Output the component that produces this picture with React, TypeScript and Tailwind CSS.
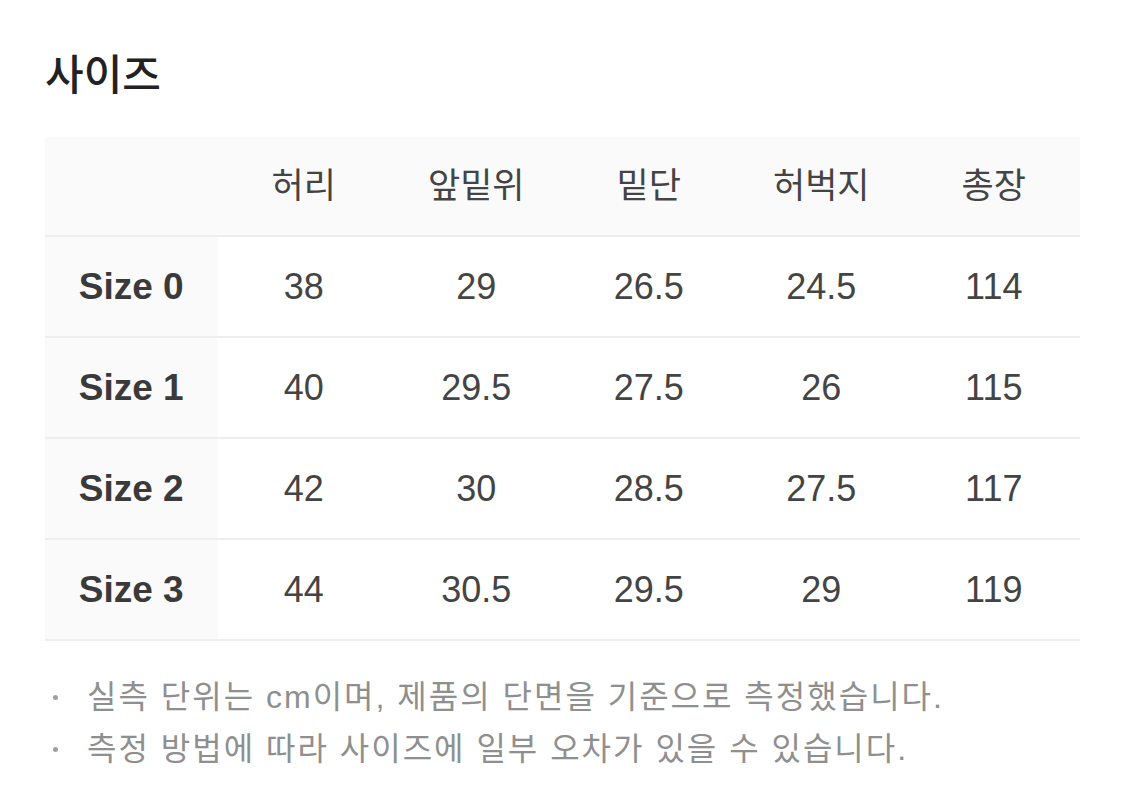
import React from 'react';

const columns = ['허리', '앞밑위', '밑단', '허벅지', '총장'];

const rows: { label: string; values: string[] }[] = [
  { label: 'Size 0', values: ['38', '29', '26.5', '24.5', '114'] },
  { label: 'Size 1', values: ['40', '29.5', '27.5', '26', '115'] },
  { label: 'Size 2', values: ['42', '30', '28.5', '27.5', '117'] },
  { label: 'Size 3', values: ['44', '30.5', '29.5', '29', '119'] },
];

const notes = [
  '실측 단위는 cm이며, 제품의 단면을 기준으로 측정했습니다.',
  '측정 방법에 따라 사이즈에 일부 오차가 있을 수 있습니다.',
];

export default function App() {
  return (
    <div
      className="min-h-screen bg-white px-[45px] pt-[50px]"
      style={{ fontFamily: '"Liberation Sans", "Noto Sans CJK KR", sans-serif' }}
    >
      {/* Title */}
      <h2 className="text-[42px] leading-[52px] font-medium text-[#222]">사이즈</h2>

      {/* Size table */}
      <div className="mt-[35px] w-[1035px]">
        <div className="grid grid-cols-6 h-[100px] bg-[#fafafa] border-b-2 border-[#eeeeee]">
          <div />
          {columns.map((c) => (
            <div key={c} className="flex items-center justify-center text-[35px] text-[#444]">
              {c}
            </div>
          ))}
        </div>
        {rows.map((r) => (
          <div key={r.label} className="grid grid-cols-6 h-[101px] border-b-2 border-[#eeeeee]">
            <div className="flex items-center justify-center bg-[#fafafa] text-[37px] font-bold text-[#3a3a3a]">
              {r.label}
            </div>
            {r.values.map((v, i) => (
              <div key={i} className="flex items-center justify-center text-[36px] text-[#444]">
                {v}
              </div>
            ))}
          </div>
        ))}
      </div>

      {/* Notes */}
      <ul className="mt-[30px] flex flex-col">
        {notes.map((n) => (
          <li key={n} className="flex items-center h-[52px] text-[32px] tracking-[2px] text-[#8f8f8f]">
            <span className="w-[42px] pl-[8px] flex items-center">
              <span className="w-[5px] h-[5px] rounded-full bg-[#a0a0a0]" />
            </span>
            <span>{n}</span>
          </li>
        ))}
      </ul>
    </div>
  );
}
